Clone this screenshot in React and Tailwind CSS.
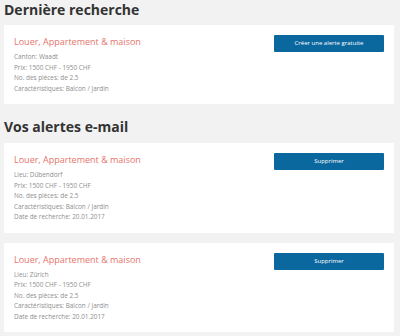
import React from "react";

const font = { fontFamily: '"Open Sans", "Liberation Sans", sans-serif' };

function Card({ lines, button }) {
  return (
    <div className="bg-white flex justify-between px-[10px] pt-[10px] pb-[10px]">
      <div className="flex flex-col">
        <div className="text-[9px] leading-[14px] text-[#e5746b] font-normal">Louer, Appartement &amp; maison</div>
        <div className="mt-[3px] flex flex-col">
          {lines.map((l, i) => (
            <div key={i} className="text-[6.4px] leading-[10.5px] text-[#8e8e8e]">{l}</div>
          ))}
        </div>
      </div>
      <div>
        <button className="w-[110px] h-[17px] bg-[#0b689f] text-white text-[6px] flex items-center justify-center rounded-[1px]">{button}</button>
      </div>
    </div>
  );
}

export default function App() {
  return (
    <div style={font} className="w-[400px] h-[336px] bg-[#f2f2f2] pl-[4px] pr-[6px] overflow-hidden">
      <h1 className="text-[14px] leading-[18px] font-bold text-[#333] pt-[1px] h-[25px]">Dernière recherche</h1>
      <Card
        button="Créer une alerte gratuite"
        lines={["Canton: Waadt", "Prix: 1500 CHF - 1950 CHF", "No. des pièces: de 2.5", "Caractéristiques: Balcon / Jardin"]}
      />
      <h2 className="text-[14px] leading-[18px] font-bold text-[#333] pt-[14px] h-[39px]">Vos alertes e-mail</h2>
      <div className="flex flex-col gap-[10px]">
        <Card
          button="Supprimer"
          lines={["Lieu: Dübendorf", "Prix: 1500 CHF - 1950 CHF", "No. des pièces: de 2.5", "Caractéristiques: Balcon / Jardin", "Date de recherche: 20.01.2017"]}
        />
        <Card
          button="Supprimer"
          lines={["Lieu: Zürich", "Prix: 1500 CHF - 1950 CHF", "No. des pièces: de 2.5", "Caractéristiques: Balcon / Jardin", "Date de recherche: 20.01.2017"]}
        />
      </div>
    </div>
  );
}
